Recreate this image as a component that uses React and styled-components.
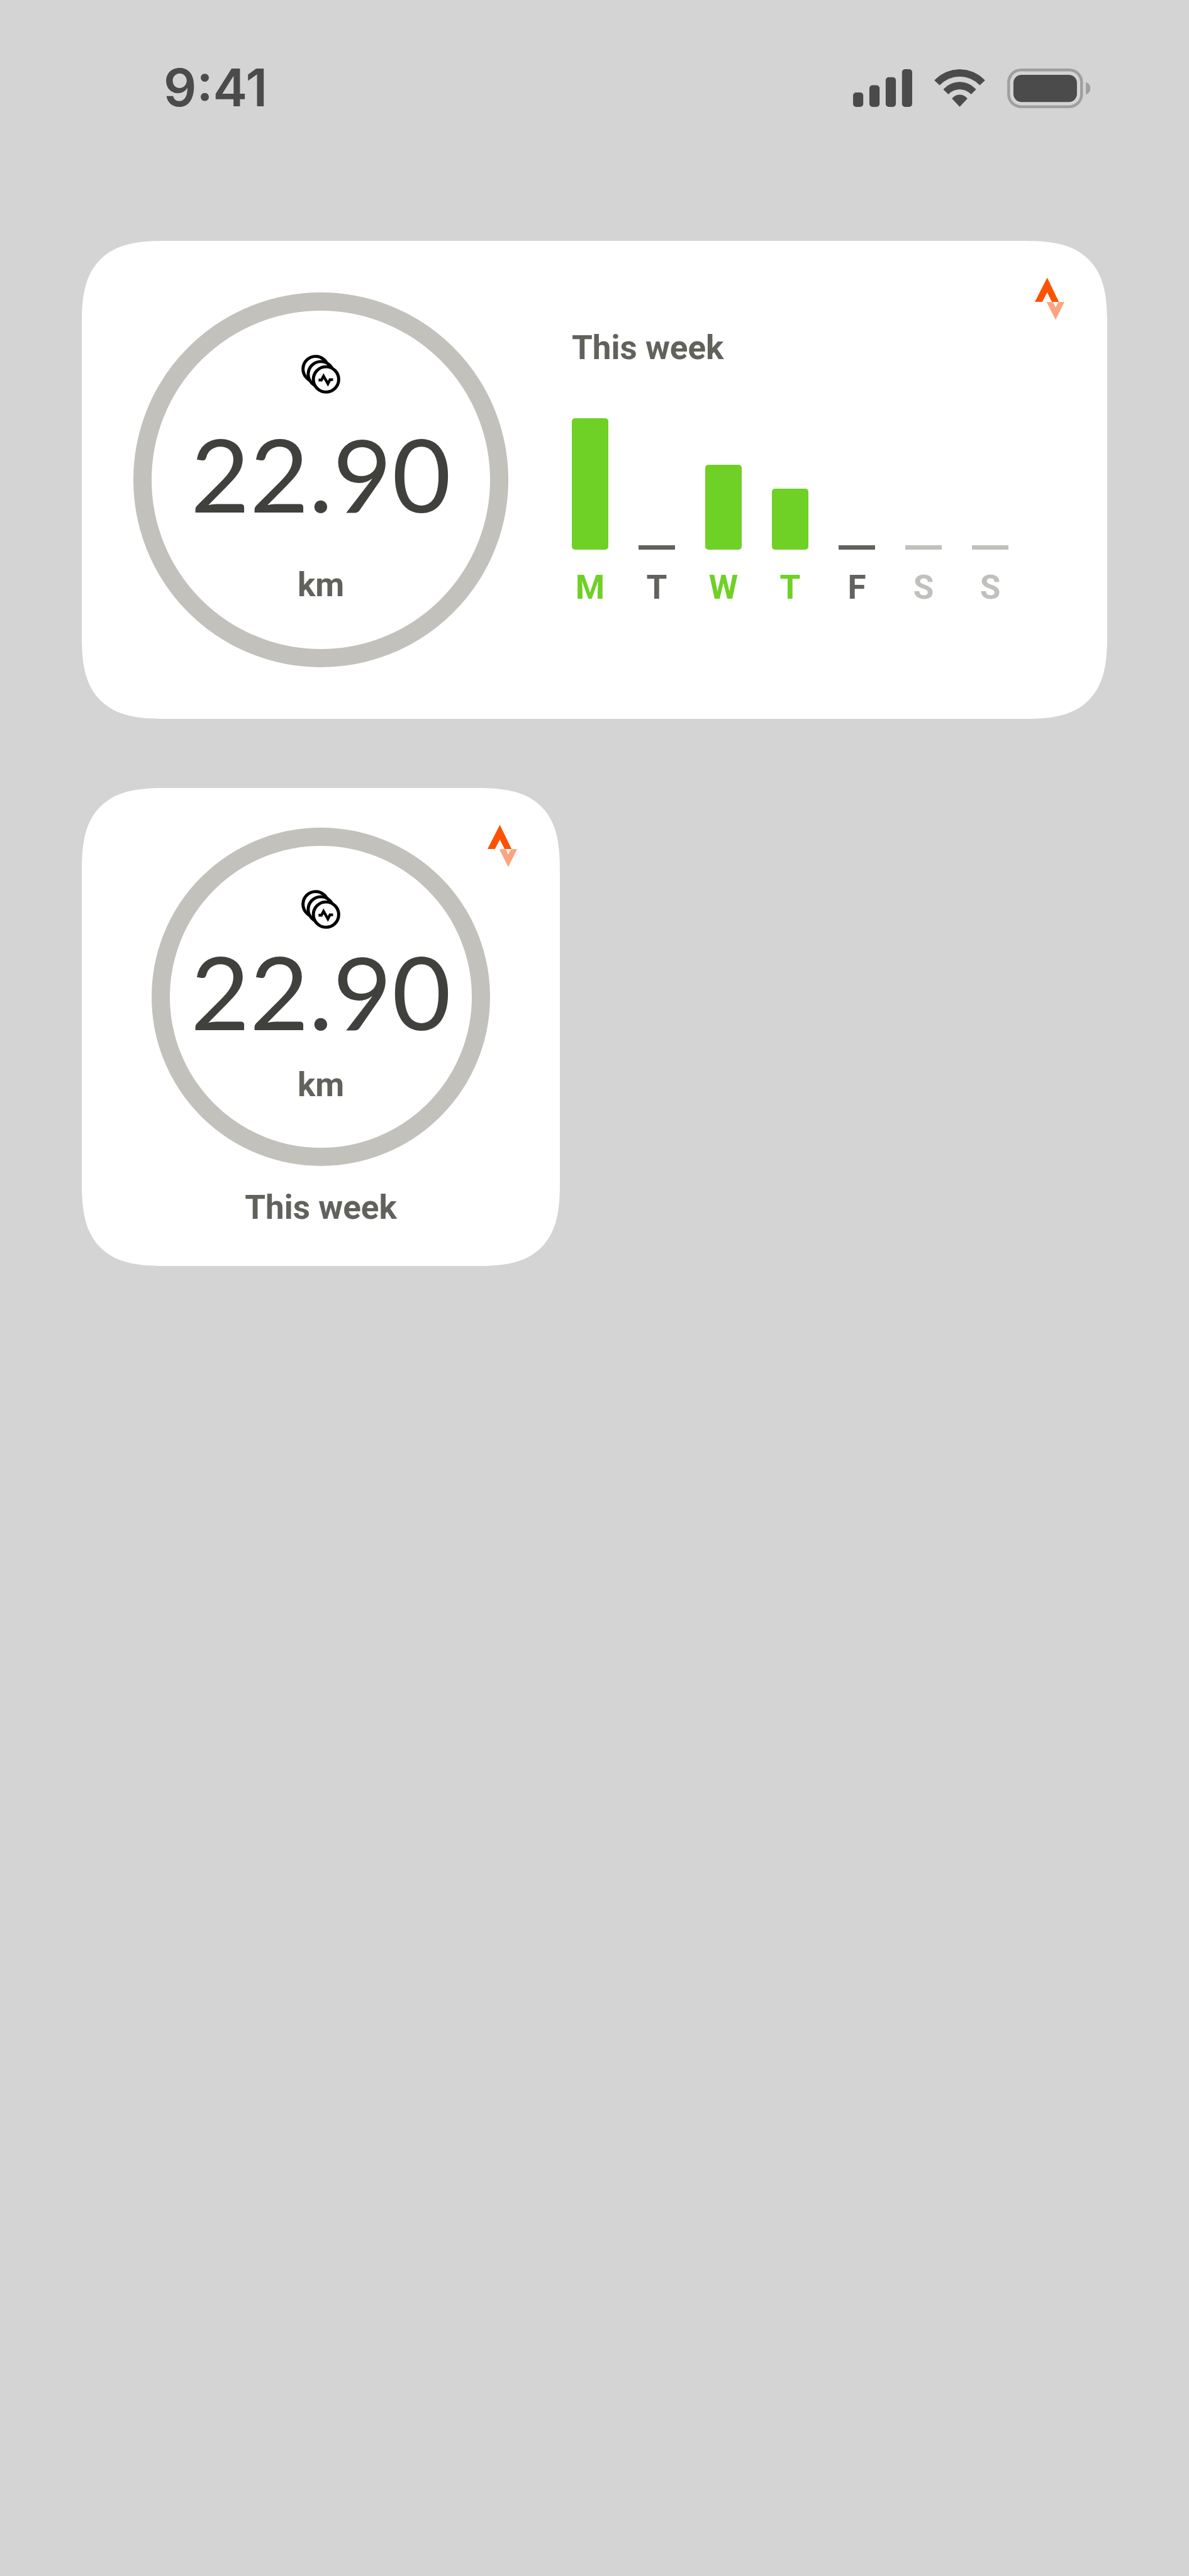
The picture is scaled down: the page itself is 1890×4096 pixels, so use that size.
import React from "react";
import styled, { createGlobalStyle } from "styled-components";

const GlobalStyle = createGlobalStyle`
  *, *::before, *::after { box-sizing: border-box; }
  body {
    margin: 0;
    background: #d4d4d4;
    font-family: Roboto, "Liberation Sans", sans-serif;
  }
  h2, p, ul { margin: 0; padding: 0; }
`;

const Screen = styled.div`
  min-height: 100vh;
  background: #d4d4d4;
`;

const StatusBar = styled.header`
  display: flex;
  align-items: center;
  justify-content: space-between;
  height: 280px;
  padding: 0 157px 0 260px;
`;

const Time = styled.time`
  font-family: Inter, sans-serif;
  font-size: 82px;
  font-weight: 600;
  line-height: 96px;
  color: #4b4b4b;
`;

const StatusIcons = styled.div`
  display: flex;
  align-items: center;
  gap: 35px;
  svg { display: block; }
`;

const Widgets = styled.main`
  display: flex;
  flex-direction: column;
  align-items: flex-start;
  gap: 110px;
  padding: 103px 130px 0;
`;

const Card = styled.section`
  position: relative;
  display: flex;
  flex-direction: ${(p) => (p.$wide ? "row" : "column")};
  align-items: ${(p) => (p.$wide ? "flex-start" : "center")};
  gap: ${(p) => (p.$wide ? "101px" : "36px")};
  width: ${(p) => (p.$wide ? "100%" : "760px")};
  min-height: 760px;
  padding: ${(p) => (p.$wide ? "82px" : "63px 0")};
  background: #fff;
  border-radius: 104px;
  @supports (corner-shape: superellipse(1.5)) {
    border-radius: 136px;
    corner-shape: superellipse(1.5);
  }
`;

const Badge = styled.svg`
  position: absolute;
  top: 58px;
  right: 68px;
  width: 47px;
  height: 68px;
`;

const Ring = styled.div`
  display: flex;
  flex-direction: column;
  align-items: center;
  flex: none;
  gap: ${(p) => (p.$large ? "49px" : "21px")};
  width: ${(p) => (p.$large ? "596px" : "538px")};
  height: ${(p) => (p.$large ? "596px" : "538px")};
  padding-top: 70px;
  border: 29px solid #c2c1bb;
  border-radius: 50%;
`;

const Coins = styled.svg`
  display: block;
  flex: none;
  width: 62px;
  height: 62px;
`;

const Distance = styled.p`
  padding-bottom: 20px;
  font-family: Lato, sans-serif;
  font-size: 162px;
  line-height: 156px;
  color: #40403d;
`;

const Label = styled.p`
  font-size: 53px;
  font-weight: 700;
  line-height: 60px;
  color: #62625d;
`;

const Week = styled.div`
  display: flex;
  flex-direction: column;
  gap: 82px;
  padding-top: 58px;
`;

const Days = styled.ul`
  display: flex;
  align-items: flex-end;
  gap: 48px;
  list-style: none;
`;

const tones = { active: "#6fd026", rest: "#62625e", future: "#c0c0bd" };

const Day = styled.li`
  display: flex;
  flex-direction: column;
  align-items: center;
  justify-content: flex-end;
  gap: 30px;
  width: 58px;
  color: ${(p) => tones[p.$tone]};
  font-size: 53px;
  font-weight: 700;
  line-height: 60px;
`;

const Bar = styled.span`
  display: block;
  width: 58px;
  border-radius: ${(p) => (p.$flat ? "0" : "5px")};
  background: currentColor;
`;

const week = [
  { day: "M", height: 209, tone: "active" },
  { day: "T", height: 7, tone: "rest" },
  { day: "W", height: 135, tone: "active" },
  { day: "T", height: 97, tone: "active" },
  { day: "F", height: 7, tone: "rest" },
  { day: "S", height: 7, tone: "future" },
  { day: "S", height: 7, tone: "future" },
];

const StravaBadge = () => (
  <Badge viewBox="0 0 144 206" role="img" aria-label="Strava">
    <path d="M60 0 L117 118 H83 L60 72 L36 118 H0 Z" fill="#fc5200" />
    <path d="M57 119 H88 L101 145 L114 119 H144 L101 206 Z" fill="#fba47f" />
  </Badge>
);

const CoinsIcon = () => (
  <Coins viewBox="80 68 188 188" fill="#fff" stroke="#000" strokeWidth="15" aria-hidden="true">
    <circle cx="149" cy="137" r="61" />
    <circle cx="174" cy="162" r="61" />
    <circle cx="199" cy="187" r="61" />
    <path d="M163 190 H177 L187 171 L208 208 L218 188 H233" fill="none" strokeWidth="13" />
  </Coins>
);

const Progress = ({ large }) => (
  <Ring $large={large}>
    <CoinsIcon />
    <Distance>22.90</Distance>
    <Label>km</Label>
  </Ring>
);

export default function App() {
  return (
    <Screen>
      <GlobalStyle />
      <StatusBar>
        <Time>9:41</Time>
        <StatusIcons>
          <svg width="94" height="60" viewBox="0 0 95 60.4" fill="#4b4b4b" aria-hidden="true">
            <rect x="0" y="37.4" width="16.4" height="23" rx="5" />
            <rect x="26.2" y="25.7" width="16.4" height="34.7" rx="5" />
            <rect x="52.4" y="12.7" width="16.4" height="47.7" rx="5" />
            <rect x="78.6" y="0" width="16.4" height="60.4" rx="5" />
          </svg>
          <svg width="81" height="60" viewBox="0 0 82 61" fill="#4b4b4b" stroke="#4b4b4b" strokeWidth="1" strokeLinejoin="round" aria-hidden="true">
            <path d="M.6 18 A55.7 55.7 0 0 1 81.4 18 L73.5 25.5 A44.7 44.7 0 0 0 8.5 25.5 Z" />
            <path d="M15 32.7 A34.8 34.8 0 0 1 67 32.7 L59.5 40.2 A25.4 25.4 0 0 0 22.5 40.2 Z" />
            <path d="M29 47.6 A15 15 0 0 1 53 47.6 L41 60.3 Z" />
          </svg>
          <svg width="132" height="63" viewBox="0 0 134 64" aria-hidden="true">
            <rect x="2.3" y="2.3" width="117.8" height="59.4" rx="20" fill="none" stroke="#9f9f9f" strokeWidth="4.6" />
            <rect x="10" y="10.2" width="102.6" height="43.8" rx="13" fill="#4b4b4b" />
            <path d="M127 22 A10.5 10.5 0 0 1 127 42 Z" fill="#9f9f9f" />
          </svg>
        </StatusIcons>
      </StatusBar>
      <Widgets>
        <Card $wide>
          <Progress large />
          <Week>
            <Label as="h2">This week</Label>
            <Days>
              {week.map((d, i) => (
                <Day key={i} $tone={d.tone}>
                  <Bar $flat={d.height < 10} style={{ height: d.height }} />
                  {d.day}
                </Day>
              ))}
            </Days>
          </Week>
          <StravaBadge />
        </Card>
        <Card>
          <Progress />
          <Label as="h2">This week</Label>
          <StravaBadge />
        </Card>
      </Widgets>
    </Screen>
  );
}
